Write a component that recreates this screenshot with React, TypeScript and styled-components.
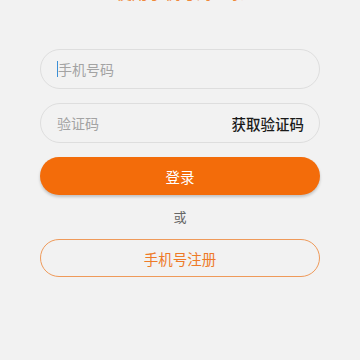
import React from 'react'
import styled, { createGlobalStyle } from 'styled-components'

const Global = createGlobalStyle`
  html, body {
    margin: 0;
    padding: 0;
    background: #f2f2f2;
    font-family: "Noto Sans CJK SC", "Noto Sans", sans-serif;
  }
`

const Page = styled.div`
  width: 360px;
  height: 360px;
  overflow: hidden;
  display: flex;
  flex-direction: column;
  align-items: center;
`

const Title = styled.div`
  margin-top: -16px;
  height: 16px;
  line-height: 16px;
  font-size: 16px;
  color: #f0883a;
`

const Form = styled.div`
  width: 280px;
  margin-top: 49px;
  display: flex;
  flex-direction: column;
`

const Field = styled.div<{ $gap?: number }>`
  height: 40px;
  box-sizing: border-box;
  border: 1px solid #dedede;
  border-radius: 20px;
  display: flex;
  align-items: center;
  padding: 0 15px 0 16px;
  margin-top: ${p => p.$gap ?? 0}px;
`

const Placeholder = styled.span<{ $cursor?: boolean }>`
  flex: 1;
  font-size: 14px;
  color: #a3a3a3;
  border-left: ${p => (p.$cursor ? '1.5px solid #3b8fd6' : 'none')};
  line-height: 16px;
`

const CodeLink = styled.span`
  font-size: 14.5px;
  color: #1a1a1a;
  font-weight: 500;
`

const Primary = styled.div`
  height: 38px;
  margin-top: 14px;
  border-radius: 19px;
  background: #f36c0a;
  color: #fff;
  font-size: 14.5px;
  display: flex;
  align-items: center;
  justify-content: center;
  box-shadow: 0 2px 3px rgba(0, 0, 0, 0.2);
`

const Or = styled.div`
  text-align: center;
  font-size: 13px;
  color: #666;
  margin-top: 12px;
  line-height: 20px;
`

const Outline = styled.div`
  height: 38px;
  box-sizing: border-box;
  margin-top: 12px;
  border-radius: 19px;
  border: 1.5px solid #ef9a5a;
  color: #ee7a28;
  font-size: 14.5px;
  display: flex;
  align-items: center;
  justify-content: center;
`

export default function App() {
  return (
    <Page>
      <Global />
      <Title>使用手机号码登录</Title>
      <Form>
        <Field>
          <Placeholder $cursor>手机号码</Placeholder>
        </Field>
        <Field $gap={14}>
          <Placeholder>验证码</Placeholder>
          <CodeLink>获取验证码</CodeLink>
        </Field>
        <Primary>登录</Primary>
        <Or>或</Or>
        <Outline>手机号注册</Outline>
      </Form>
    </Page>
  )
}
